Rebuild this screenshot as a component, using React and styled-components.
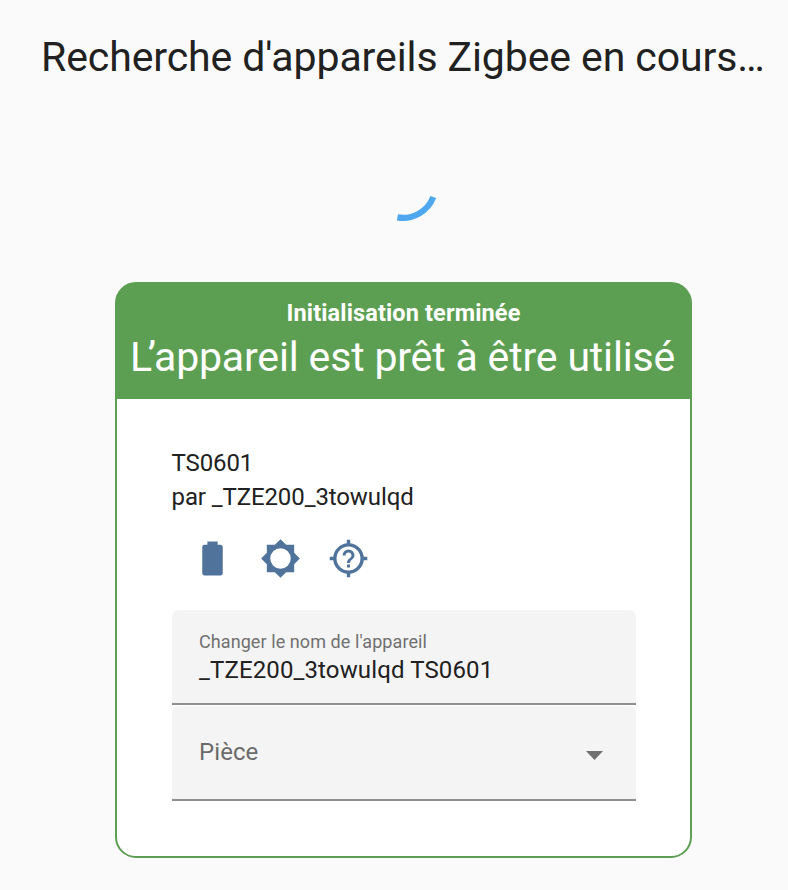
import React from "react";
import styled, { createGlobalStyle } from "styled-components";

const Global = createGlobalStyle`
  * { box-sizing: border-box; }
  body { margin: 0; background: #fafafa; font-family: Roboto, sans-serif; color: #212121; -webkit-font-smoothing: antialiased; }
`;
const Page = styled.main`
  height: 890px;
  overflow: hidden;
  display: flex;
  flex-direction: column;
`;
const Title = styled.h1`
  margin: 33px 0 0 41px;
  font-size: 41px;
  line-height: 48px;
  font-weight: 400;
  letter-spacing: -0.1px;
  white-space: nowrap;
`;
const Spinner = styled.svg`
  display: block;
  width: 96px;
  height: 96px;
  margin: 44px 0 0 355px;
`;
const Card = styled.section`
  width: 577px;
  height: 576px;
  margin: 61px 0 0 115px;
  border: 2px solid #5d9f52;
  border-radius: 21px;
  background: linear-gradient(#5d9f52 60px, #fff 60px);
  overflow: hidden;
`;
const Header = styled.header`
  height: 115px;
  padding-top: 15px;
  background: #5d9f52;
  color: #fff;
  text-align: center;
  white-space: nowrap;
`;
const Status = styled.div`
  font-size: 23.5px;
  line-height: 28px;
  font-weight: 700;
  letter-spacing: 0.13px;
`;
const Message = styled.div`
  font-size: 41px;
  line-height: 48px;
  margin-top: 6px;
  padding-right: 2px;
  letter-spacing: -0.16px;
`;
const Kern = styled.span`
  letter-spacing: ${(p) => p.$space}px;
`;
const Body = styled.div`
  padding: 47px 54px 0 55px;
`;
const Info = styled.div`
  margin-left: -0.5px;
  font-size: 24px;
  line-height: 34px;
  letter-spacing: -0.1px;
`;
const Icons = styled.div`
  display: flex;
  gap: 27px;
  margin: 24px 0 0 20px;
`;
const Icon = styled.svg`
  display: block;
  width: 41px;
  height: 41px;
  fill: #50739b;
`;
const Field = styled.div`
  height: 95px;
  padding: 21px 27px 0;
  background: #f4f4f4;
  border-bottom: 2px solid #8f8f8f;
  border-radius: 7px 7px 0 0;
`;
const Fields = styled.div`
  display: grid;
  gap: 1px;
  margin-top: 31px;
`;
const Label = styled.div`
  font-size: 18px;
  line-height: 22px;
  letter-spacing: 0.08px;
  color: #707070;
`;
const Value = styled.div`
  font-size: 24px;
  line-height: 34px;
  letter-spacing: 0.13px;
`;
const Select = styled(Field)`
  display: flex;
  align-items: center;
  justify-content: space-between;
  padding: 0 33px 2px 27px;
  font-size: 24px;
  letter-spacing: 0.08px;
  color: #6b6b6b;
`;
const Arrow = styled.svg`
  width: 17px;
  height: 9px;
  margin-top: 7px;
  fill: #707070;
`;

const icons = [
  "M16.67 4H15V2H9V4H7.33A1.33 1.33 0 0 0 6 5.33V20.67C6 21.4 6.6 22 7.33 22H16.67A1.33 1.33 0 0 0 18 20.67V5.33C18 4.6 17.4 4 16.67 4Z",
  "M12 18A6 6 0 0 1 6 12A6 6 0 0 1 12 6A6 6 0 0 1 18 12A6 6 0 0 1 12 18M20 15.31L23.31 12L20 8.69V4H15.31L12 0.69L8.69 4H4V8.69L0.69 12L4 15.31V20H8.69L12 23.31L15.31 20H20V15.31Z",
  "M20.94 11H23V13H20.94A9 9 0 0 1 13 20.94V23H11V20.94A9 9 0 0 1 3.06 13H1V11H3.06A9 9 0 0 1 11 3.06V1H13V3.06A9 9 0 0 1 20.94 11ZM12 5A7 7 0 1 0 12 19A7 7 0 0 0 12 5ZM11.13 17.25H12.88V15.5H11.13V17.25ZM12 6.75A3.5 3.5 0 0 0 8.5 10.25H10.25C10.25 9.28 11.03 8.5 12 8.5S13.75 9.28 13.75 10.25C13.75 12 11.13 11.78 11.13 14.63H12.88C12.88 12.66 15.5 12.44 15.5 10.25A3.5 3.5 0 0 0 12 6.75Z",
];

export default function App() {
  return (
    <Page>
      <Global />
      <Title>Recherche d'appareils Zigbee en cours…</Title>
      <Spinner viewBox="0 0 96 96" fill="none">
        <path d="M42.4 92.4A32.6 32.6 0 0 0 78.3 72" stroke="#4ea7ef" strokeWidth="6.2" />
      </Spinner>
      <Card>
        <Header>
          <Status>Initialisation terminée</Status>
          <Message><Kern $space={-4.3}>L</Kern><Kern $space={-1.9}>’</Kern>appareil est prêt à être utilisé</Message>
        </Header>
        <Body>
          <Info>TS0601<br />par _TZE200_3towulqd</Info>
          <Icons>
            {icons.map((d) => <Icon key={d} viewBox="0 0 24 24"><path fillRule="evenodd" d={d} /></Icon>)}
          </Icons>
          <Fields>
            <Field>
              <Label>Changer le nom de l'appareil</Label>
              <Value>_TZE200_3towulqd TS0601</Value>
            </Field>
            <Select>
              Pièce
              <Arrow viewBox="0 0 18 9" preserveAspectRatio="none"><path d="M0 0H18L9 9Z" /></Arrow>
            </Select>
          </Fields>
        </Body>
      </Card>
    </Page>
  );
}
